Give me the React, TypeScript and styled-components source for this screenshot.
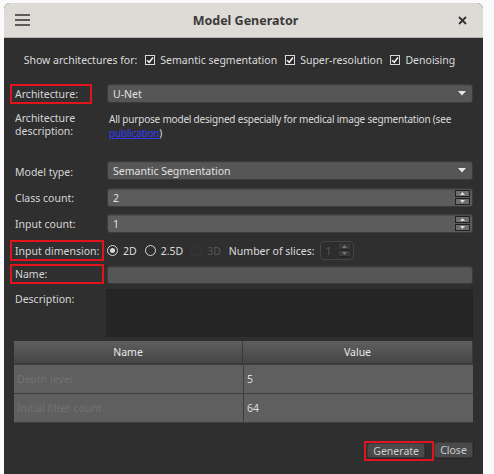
import React from "react";
import styled, { createGlobalStyle } from "styled-components";

const Global = createGlobalStyle`
  html, body { margin: 0; padding: 0; background: #fafafa; }
  body { font-family: "Noto Sans", "Open Sans", sans-serif; font-size: 10.5px; }
  * { box-sizing: border-box; }
`;

const Window = styled.div`
  margin: 3px 0 0 4px;
  width: 479px;
  height: 471px;
  background: #2f2f2f;
  border-radius: 6px 6px 0 0;
  overflow: hidden;
  display: flex;
  flex-direction: column;
`;

const TitleBar = styled.div`
  height: 35px;
  background: #dedbd7;
  border-bottom: 1px solid #b9b5b0;
  display: flex;
  align-items: center;
  justify-content: space-between;
  padding: 0 12px 0 10px;
  color: #333;
`;

const Title = styled.div`
  font-weight: 700;
  font-size: 12.5px;
  color: #3a3a3a;
  margin-left: 6px;
`;

const IconBtn = styled.div`
  width: 16px;
  height: 16px;
  display: flex;
  align-items: center;
  justify-content: center;
`;

const Body = styled.div`
  flex: 1;
  display: flex;
  flex-direction: column;
  padding: 0 10px 0 6px;
  color: #dcdcdc;
`;

const FilterRow = styled.div`
  display: flex;
  align-items: center;
  justify-content: center;
  gap: 5px;
  margin-top: 14px;
  height: 16px;
  padding-right: 4px;
`;

const CheckItem = styled.label`
  display: flex;
  align-items: center;
  gap: 5px;
  margin-left: 3px;
`;

const CheckBox = styled.span`
  width: 10px;
  height: 10px;
  border: 1px solid #d8d8d8;
  background: #2a2a2a;
  display: flex;
  align-items: center;
  justify-content: center;
`;

const FormRow = styled.div<{ $mt: number; $h?: number }>`
  display: grid;
  grid-template-columns: 94px 366px;
  column-gap: 3px;
  margin-top: ${(p) => p.$mt}px;
  min-height: ${(p) => p.$h ?? 19}px;
  align-items: start;
`;

const Label = styled.div<{ $boxed?: boolean; $w?: number; $h?: number }>`
  width: ${(p) => p.$w ?? 94}px;
  height: ${(p) => p.$h ?? 20}px;
  border: 2px solid ${(p) => (p.$boxed ? "#e0141a" : "transparent")};
  padding: 0 0 0 3px;
  display: flex;
  align-items: center;
  color: #d6d6d6;
  white-space: nowrap;
`;

const MultiLabel = styled.div`
  padding: 1px 0 0 5px;
  line-height: 13px;
  color: #d6d6d6;
`;

const Field = styled.div<{ $h?: number; $mt?: number }>`
  height: ${(p) => p.$h ?? 19}px;
  margin-top: ${(p) => p.$mt ?? 0}px;
  background: #565656;
  border: 1px solid #3c3c3c;
  border-radius: 3px;
  display: flex;
  align-items: center;
  justify-content: space-between;
  padding: 0 6px 0 5px;
  color: #e2e2e2;
  box-shadow: inset 0 1px 0 #4e4e4e;
`;

const SpinField = styled(Field)`
  background: #5c5c5c;
  padding-right: 2px;
`;

const SpinButtons = styled.div`
  display: flex;
  flex-direction: column;
  gap: 1px;
`;

const SpinBtn = styled.div`
  width: 15px;
  height: 7px;
  background: #6e6e6e;
  border: 1px solid #222;
  display: flex;
  align-items: center;
  justify-content: center;
`;

const Desc = styled.div`
  padding: 1px 0 0 2px;
  line-height: 14px;
  font-size: 10px;
  color: #dcdcdc;
  white-space: nowrap;
  letter-spacing: -0.2px;
`;

const Link = styled.a`
  color: #2f3cff;
  text-decoration: underline;
`;

const RadioRow = styled.div`
  display: flex;
  align-items: center;
  height: 21px;
  gap: 5px;
  padding-left: 0;
`;

const Radio = styled.span<{ $checked?: boolean; $disabled?: boolean }>`
  width: 11px;
  height: 11px;
  border-radius: 50%;
  border: 1px solid ${(p) => (p.$disabled ? "#3a3a3a" : "#d8d8d8")};
  display: flex;
  align-items: center;
  justify-content: center;
  &::after {
    content: "";
    width: 5px;
    height: 5px;
    border-radius: 50%;
    background: ${(p) => (p.$checked ? "#d8d8d8" : "transparent")};
  }
`;

const RadioText = styled.span<{ $disabled?: boolean }>`
  color: ${(p) => (p.$disabled ? "#555" : "#dcdcdc")};
  margin-right: 3px;
`;

const SmallSpin = styled.div`
  width: 34px;
  height: 19px;
  border: 1px solid #444;
  border-radius: 4px;
  background: #2d2d2d;
  display: flex;
  align-items: center;
  justify-content: space-between;
  padding: 0 3px 0 5px;
  color: #5a5a5a;
  margin-left: -3px;
`;

const SmallSpinBtn = styled.div`
  width: 11px;
  height: 6px;
  background: #3a3a3a;
  border-bottom: 1px solid #222;
  display: flex;
  align-items: center;
  justify-content: center;
`;

const TextArea = styled.div`
  height: 48px;
  background: #252525;
  margin-left: -1px;
`;

const Table = styled.div`
  margin: 4px 0 0 4px;
  width: 459px;
  display: grid;
  grid-template-columns: 229px 230px;
  background: #5f5f5f;
  border-bottom: 1px solid #3e3e3e;
`;

const HeadCell = styled.div`
  height: 23px;
  background: linear-gradient(#5e5e5e, #555 40%, #4a4a4a 80%, #454545);
  border-right: 1px solid #3a3a3a;
  border-bottom: 1px solid #3a3a3a;
  display: flex;
  align-items: center;
  justify-content: center;
  color: #e8e8e8;
  &:last-child { border-right: none; }
`;

const Cell = styled.div<{ $dim?: boolean }>`
  height: 29px;
  display: flex;
  align-items: center;
  padding-left: 3px;
  color: ${(p) => (p.$dim ? "#727272" : "#dedede")};
  border-top: 1px solid #3e3e3e;
  border-left: ${(p) => (p.$dim ? "none" : "1px solid #3e3e3e")};
`;

const ButtonRow = styled.div`
  margin-top: 18px;
  display: flex;
  justify-content: flex-end;
`;

const RedFrame = styled.div`
  border: 2px solid #e0141a;
  padding: 0 7px 2px 1px;
  height: 20px;
`;

const Button = styled.div`
  height: 15px;
  background: #4a4a4a;
  border: 1px solid #3a3a3a;
  border-radius: 3px;
  color: #cfcfcf;
  padding: 0 5px;
  display: flex;
  align-items: center;
  justify-content: center;
  box-shadow: 1px 1px 0 #272727;
`;

const CloseButton = styled(Button)`
  margin-top: 1px;
  height: 16px;
  padding: 0 3px;
  width: 39px;
`;

const Arrow = () => (
  <svg width="8" height="5" viewBox="0 0 8 5">
    <path d="M0 0 H8 L4 4.5 Z" fill="#e8e8e8" />
  </svg>
);

const Tri = ({ up, color = "#ddd" }: { up?: boolean; color?: string }) => (
  <svg width="5" height="3" viewBox="0 0 5 3">
    <path d={up ? "M0 3 H5 L2.5 0 Z" : "M0 0 H5 L2.5 3 Z"} fill={color} />
  </svg>
);

const Check = () => (
  <svg width="8" height="8" viewBox="0 0 8 8">
    <path d="M1 4.2 L3.2 6.3 L7 1.5" stroke="#f0f0f0" strokeWidth="1.5" fill="none" />
  </svg>
);

const Spin = ({ value }: { value: string }) => (
  <SpinField>
    <span>{value}</span>
    <SpinButtons>
      <SpinBtn><Tri up /></SpinBtn>
      <SpinBtn><Tri /></SpinBtn>
    </SpinButtons>
  </SpinField>
);

export default function App() {
  return (
    <>
      <Global />
      <Window>
        <TitleBar>
          <IconBtn>
            <svg width="15" height="12" viewBox="0 0 15 12">
              <path d="M0 1 H15 M0 6 H15 M0 11 H15" stroke="#333" strokeWidth="1.4" />
            </svg>
          </IconBtn>
          <Title>Model Generator</Title>
          <IconBtn>
            <svg width="9" height="9" viewBox="0 0 9 9">
              <path d="M1 1 L8 8 M8 1 L1 8" stroke="#333" strokeWidth="1.8" />
            </svg>
          </IconBtn>
        </TitleBar>
        <Body>
          <FilterRow>
            <span>Show architectures for:</span>
            <CheckItem><CheckBox><Check /></CheckBox>Semantic segmentation</CheckItem>
            <CheckItem><CheckBox><Check /></CheckBox>Super-resolution</CheckItem>
            <CheckItem><CheckBox><Check /></CheckBox>Denoising</CheckItem>
          </FilterRow>

          <FormRow $mt={16}>
            <Label $boxed $w={82}>Architecture:</Label>
            <Field><span>U-Net</span><Arrow /></Field>
          </FormRow>

          <FormRow $mt={7} $h={45}>
            <MultiLabel>Architecture<br />description:</MultiLabel>
            <Desc>
              All purpose model designed especially for medical image segmentation (see
              <br />
              <Link>publication</Link>)
            </Desc>
          </FormRow>

          <FormRow $mt={6}>
            <Label>Model type:</Label>
            <Field $mt={-1}><span>Semantic Segmentation</span><Arrow /></Field>
          </FormRow>

          <FormRow $mt={6}>
            <Label>Class count:</Label>
            <Spin value="2" />
          </FormRow>

          <FormRow $mt={6}>
            <Label>Input count:</Label>
            <Spin value="1" />
          </FormRow>

          <FormRow $mt={6}>
            <Label $boxed $h={21}>Input dimension:</Label>
            <RadioRow>
              <Radio $checked />
              <RadioText>2D</RadioText>
              <Radio />
              <RadioText>2.5D</RadioText>
              <Radio $disabled />
              <RadioText $disabled>3D</RadioText>
              <RadioText>Number of slices:</RadioText>
              <SmallSpin>
                <span>1</span>
                <SpinButtons>
                  <SmallSpinBtn><Tri up color="#777" /></SmallSpinBtn>
                  <SmallSpinBtn><Tri color="#777" /></SmallSpinBtn>
                </SpinButtons>
              </SmallSpin>
            </RadioRow>
          </FormRow>

          <FormRow $mt={3}>
            <Label $boxed>Name:</Label>
            <Field $h={18} $mt={2} />
          </FormRow>

          <FormRow $mt={5}>
            <Label>Description:</Label>
            <TextArea />
          </FormRow>

          <Table>
            <HeadCell>Name</HeadCell>
            <HeadCell>Value</HeadCell>
            <Cell $dim>Depth level</Cell>
            <Cell>5</Cell>
            <Cell $dim>Initial filter count</Cell>
            <Cell>64</Cell>
          </Table>

          <ButtonRow>
            <RedFrame>
              <Button>Generate</Button>
            </RedFrame>
            <CloseButton>Close</CloseButton>
          </ButtonRow>
        </Body>
      </Window>
    </>
  );
}
